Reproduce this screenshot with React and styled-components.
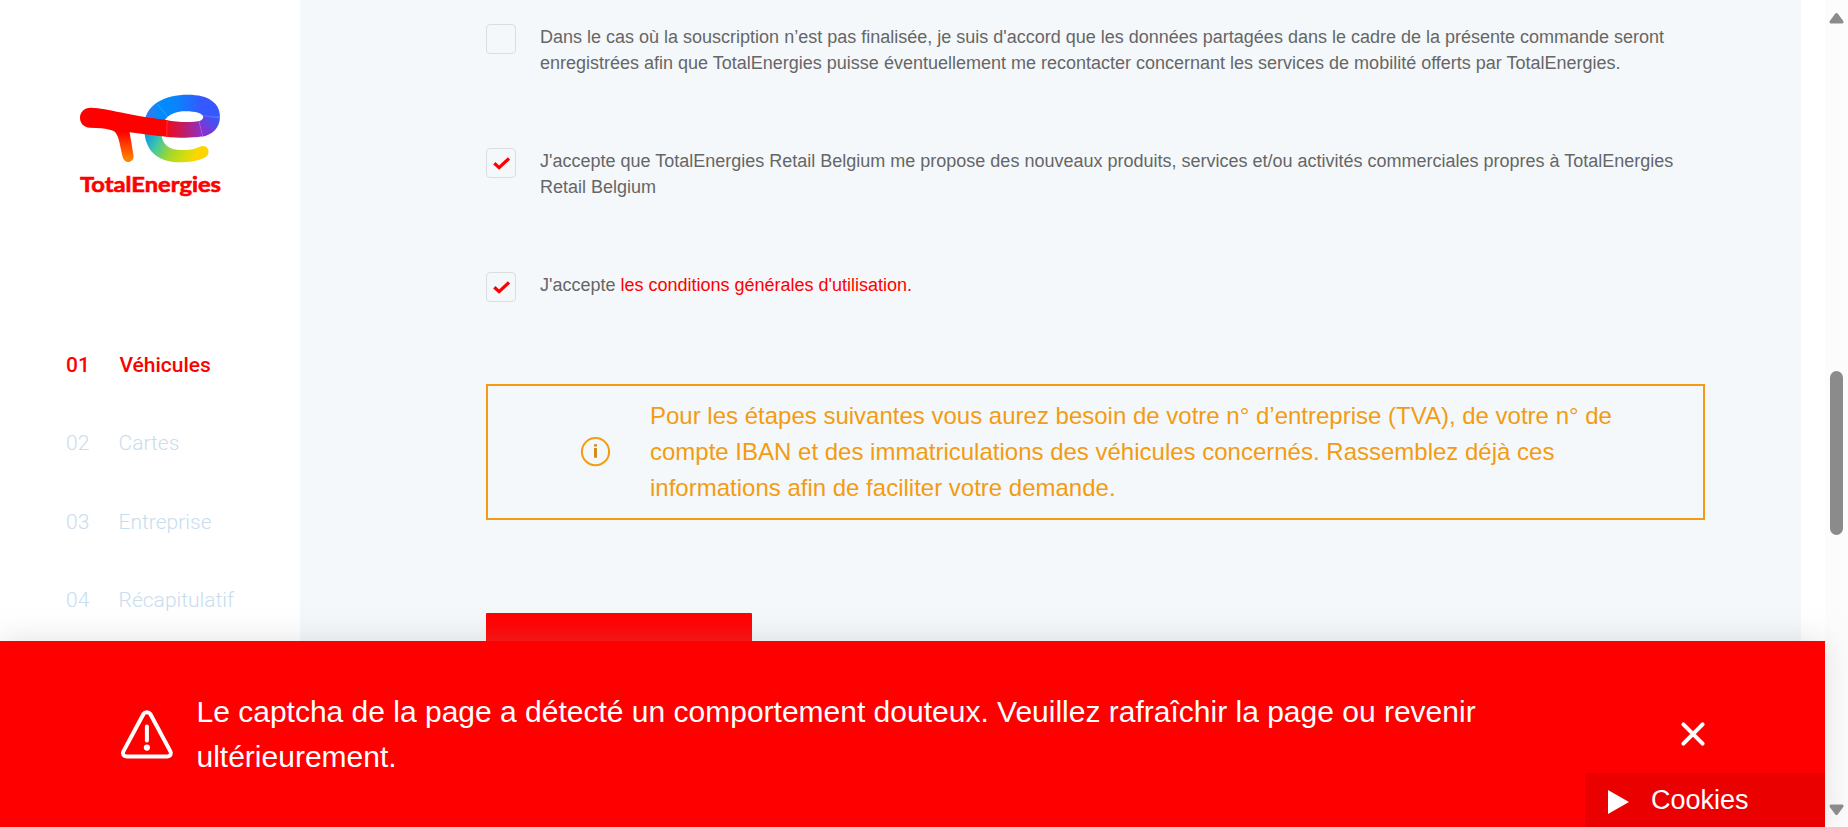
import React from "react";
import styled, { createGlobalStyle } from "styled-components";

const GlobalStyle = createGlobalStyle`
  * { box-sizing: border-box; }
  body {
    margin: 0;
    overflow: hidden;
    background: #fff;
    font-family: "Liberation Sans", Arial, sans-serif;
  }
`;

const Page = styled.div`
  position: relative;
  display: flex;
  width: 1848px;
  height: 827px;
  overflow: hidden;
`;

const Sidebar = styled.aside`
  width: 300px;
  flex: none;
  padding-top: 80px;
`;

const LogoSvg = styled.svg`
  display: block;
  width: 180px;
  height: 130px;
  margin-left: 60px;
`;

const Steps = styled.ol`
  list-style: none;
  margin: 0;
  padding: 135px 0 0 66px;
  font-family: Roboto, sans-serif;
`;

const Step = styled.li`
  display: flex;
  height: 78.3px;
  line-height: 40px;
  font-size: 21px;
  font-weight: ${(p) => (p.$active ? 500 : 300)};
  color: ${(p) => (p.$active ? "#ff0000" : "#c8ddee")};
`;

const StepNumber = styled.span`
  width: ${(p) => (p.$active ? 53.4 : 52.6)}px;
`;

const Main = styled.main`
  width: 1501px;
  flex: none;
  padding: 24px 96px 0 186px;
  background: #f4f8fb;
`;

const Consents = styled.div`
  display: grid;
  grid-auto-rows: 124px;
`;

const Consent = styled.label`
  display: flex;
  align-items: flex-start;
  gap: 24px;
`;

const Checkbox = styled.span`
  display: flex;
  align-items: center;
  justify-content: center;
  flex: none;
  width: 30px;
  height: 30px;
  border: 1px solid #dcdddf;
  border-radius: 4px;
`;

const ConsentText = styled.span`
  flex: 1;
  font-size: 18px;
  line-height: 26px;
  color: #666;
`;

const TermsLink = styled.a`
  color: #f00;
`;

const Notice = styled.div`
  display: flex;
  align-items: center;
  margin-top: -12px;
  padding: 12px 0 12px 92px;
  border: 2px solid #f39c12;
  color: #f39c12;
`;

const NoticeText = styled.p`
  width: 970px;
  margin: 0 0 0 39px;
  font-size: 24px;
  line-height: 36px;
`;

const SubmitButton = styled.button`
  display: block;
  width: 266px;
  height: 60px;
  margin-top: 93px;
  border: 0;
  border-radius: 1px;
  background: #f00;
`;

const Scrollbar = styled.div`
  display: flex;
  flex-direction: column;
  align-items: center;
  width: 23px;
  margin-left: auto;
  padding: 12px 0 11px;
  background: #fcfcfc;
`;

const ScrollArrow = styled.svg`
  flex: none;
  width: 15px;
  height: 12px;
  fill: #8b8b8b;
  stroke: #8b8b8b;
  stroke-width: 3;
  stroke-linejoin: round;
`;

const ScrollThumb = styled.div`
  width: 13px;
  height: 164px;
  margin: 347px 0 auto;
  border-radius: 7px;
  background: #8b8b8b;
`;

const ErrorBanner = styled.div`
  position: absolute;
  left: 0;
  bottom: 0;
  display: flex;
  align-items: center;
  width: 1825px;
  height: 186px;
  padding-left: 120px;
  background: #f00;
  color: #fff;
  box-shadow: 0 0 30px rgba(157, 157, 157, 0.3);
`;

const BannerText = styled.p`
  width: 1330px;
  margin: 0 0 0 22.5px;
  font-size: 30px;
  line-height: 45px;
`;

const CloseButton = styled.button`
  display: flex;
  margin-left: 153.5px;
  padding: 0;
  border: 0;
  background: none;
`;

const CookiesTab = styled.div`
  position: absolute;
  right: 0;
  bottom: 0;
  display: flex;
  align-items: center;
  width: 240px;
  height: 54px;
  padding: 0 0 0 23px;
  background: #eb0000;
  font-size: 27px;
  line-height: 54px;
`;

const PlayIcon = styled.svg`
  width: 21px;
  height: 24px;
  margin: 4px 22px 0 0;
`;

function Logo() {
  return (
    <LogoSvg viewBox="0 0 540 390">
      <defs>
        <linearGradient id="leg" x1="0" y1="150" x2="0" y2="245" gradientUnits="userSpaceOnUse">
          <stop offset="0.05" stopColor="#f00" />
          <stop offset="0.9" stopColor="#ff8000" />
        </linearGradient>
        <linearGradient id="top" x1="258" y1="0" x2="480" y2="0" gradientUnits="userSpaceOnUse">
          <stop offset="0" stopColor="#3f78e8" />
          <stop offset="0.18" stopColor="#008cff" />
          <stop offset="0.4" stopColor="#0786fa" />
          <stop offset="0.75" stopColor="#3558ff" />
          <stop offset="1" stopColor="#3457ff" />
        </linearGradient>
        <linearGradient id="turn" x1="462" y1="112" x2="426" y2="150" gradientUnits="userSpaceOnUse">
          <stop offset="0" stopColor="#3b55f5" />
          <stop offset="1" stopColor="#8732d0" />
        </linearGradient>
        <linearGradient id="bar" x1="320" y1="0" x2="430" y2="0" gradientUnits="userSpaceOnUse">
          <stop offset="0" stopColor="#ee0a1c" />
          <stop offset="0.4" stopColor="#c71958" />
          <stop offset="1" stopColor="#8732d0" />
        </linearGradient>
        <linearGradient id="bottom" x1="262" y1="165" x2="400" y2="240" gradientUnits="userSpaceOnUse">
          <stop offset="0" stopColor="#119be5" />
          <stop offset="0.25" stopColor="#43c8a0" />
          <stop offset="0.55" stopColor="#a4d82a" />
          <stop offset="0.85" stopColor="#dbdc0d" />
          <stop offset="1" stopColor="#ffd500" />
        </linearGradient>
      </defs>
      <g transform="translate(0 1)">
        <path fill="url(#bottom)" d="M253 145 C253 208 292 246 358 246 C390 246 414 241 434 232 C445 227 448 216 444 207 C440 198 430 195 420 199 C402 207 386 209 364 209 C328 209 304 193 304 155 Z" />
        <path fill="url(#top)" d="M254 122 C262 73 312 43 384 43 C446 43 480 68 480 109 L430 111 C430 99 406 93 377 93 C349 93 327 100 311 124 Z" />
        <path fill="url(#turn)" d="M430 106 L480 110 C479 143 458 163 427 169 L417 123 C427 119 431 114 430 106 Z" />
        <path fill="url(#bar)" d="M318 119 C354 126 393 127 418 122 L428 168 C389 175 350 172 318 169 Z" />
        <path fill="url(#leg)" d="M150 145 C168 151 174 167 178 185 L187 227 C190 239 196 245 205 245 C217 244 222 235 220 222 L207 145 Z" />
        <path fill="#f00" d="M94 82 C142 84 210 106 322 119 L320 169 C280 166 242 159 203 155 L163 153 C153 148 139 146 124 144 L90 142 C71 141 60 128 60 112 C60 95 73 81 94 82 Z" />
        <path fill="none" stroke="#fff" strokeOpacity="0.28" strokeWidth="2" d="M293 72 L322 108 M430 106 L480 113 M417 123 L428 168 M321 121 L320 168" />
      </g>
      <text x="60" y="336" fill="#f00" stroke="#f00" strokeWidth="1.8" fontFamily="Lato, sans-serif" fontWeight="700" fontSize="61" textLength="423" lengthAdjust="spacingAndGlyphs">
        TotalEnergies
      </text>
    </LogoSvg>
  );
}

function CheckMark() {
  return (
    <svg width="18" height="14" viewBox="0 0 18 14">
      <path d="M2.3 7.2 L7.1 11.6 L17 2.4" fill="none" stroke="#f00" strokeWidth="3.3" />
    </svg>
  );
}

function InfoIcon() {
  return (
    <svg width="31" height="32" viewBox="0 0 31 32">
      <circle cx="15.5" cy="15.7" r="13.6" fill="none" stroke="#f39c12" strokeWidth="2" />
      <path d="M14 8.2h3v2.4H14zM14 12h3v9.8H14z" fill="#d28b1d" />
    </svg>
  );
}

function WarningIcon() {
  return (
    <svg width="54" height="50" viewBox="0 -0.4 54 50" fill="none" stroke="#fff" strokeWidth="4" strokeLinecap="round" strokeLinejoin="round">
      <path d="M23.6 4.4 C25 2.2 28.8 2.2 30.2 4.4 L50.4 42 C51.8 44.6 50.2 47 47.2 47 H6.6 C3.6 47 2 44.6 3.4 42 Z" />
      <path d="M26.9 17 V31" />
      <circle cx="26.9" cy="38.2" r="3.1" fill="#fff" stroke="none" />
    </svg>
  );
}

function CloseIcon() {
  return (
    <svg width="26" height="26" viewBox="0 0 26 26">
      <path d="M3.4 3.4 L22.6 22.6 M22.6 3.4 L3.4 22.6" stroke="#fff" strokeWidth="4" strokeLinecap="round" />
    </svg>
  );
}

const steps = ["Véhicules", "Cartes", "Entreprise", "Récapitulatif"];

function ConsentRow({ checked, children }) {
  return (
    <Consent>
      <Checkbox>{checked && <CheckMark />}</Checkbox>
      <ConsentText>{children}</ConsentText>
    </Consent>
  );
}

export default function App() {
  return (
    <>
      <GlobalStyle />
      <Page>
        <Sidebar>
          <Logo />
          <Steps>
            {steps.map((label, i) => (
              <Step key={label} $active={i === 0}>
                <StepNumber $active={i === 0}>{`0${i + 1}`}</StepNumber>
                <span>{label}</span>
              </Step>
            ))}
          </Steps>
        </Sidebar>
        <Main>
          <Consents>
            <ConsentRow>
              Dans le cas où la souscription n’est pas finalisée, je suis d'accord que les données partagées dans le cadre de la présente commande seront enregistrées afin que TotalEnergies puisse éventuellement me recontacter concernant les services de mobilité offerts par TotalEnergies.
            </ConsentRow>
            <ConsentRow checked>
              J'accepte que TotalEnergies Retail Belgium me propose des nouveaux produits, services et/ou activités commerciales propres à TotalEnergies Retail Belgium
            </ConsentRow>
            <ConsentRow checked>
              J'accepte <TermsLink>les conditions générales d'utilisation.</TermsLink>
            </ConsentRow>
          </Consents>
          <Notice>
            <InfoIcon />
            <NoticeText>
              Pour les étapes suivantes vous aurez besoin de votre n° d’entreprise (TVA), de votre n° de compte IBAN et des immatriculations des véhicules concernés. Rassemblez déjà ces informations afin de faciliter votre demande.
            </NoticeText>
          </Notice>
          <SubmitButton />
        </Main>
        <Scrollbar>
          <ScrollArrow viewBox="0 0 15 12"><path d="M7.5 2.5 L13 10 H2 Z" /></ScrollArrow>
          <ScrollThumb />
          <ScrollArrow viewBox="0 0 15 12"><path d="M7.5 9.5 L13 2 H2 Z" /></ScrollArrow>
        </Scrollbar>
        <ErrorBanner>
          <WarningIcon />
          <BannerText>
            Le captcha de la page a détecté un comportement douteux. Veuillez rafraîchir la page ou revenir ultérieurement.
          </BannerText>
          <CloseButton>
            <CloseIcon />
          </CloseButton>
          <CookiesTab>
            <PlayIcon viewBox="0 0 21 24"><path d="M0 0 L21 12 L0 24 Z" fill="#fff" /></PlayIcon>
            Cookies
          </CookiesTab>
        </ErrorBanner>
      </Page>
    </>
  );
}
